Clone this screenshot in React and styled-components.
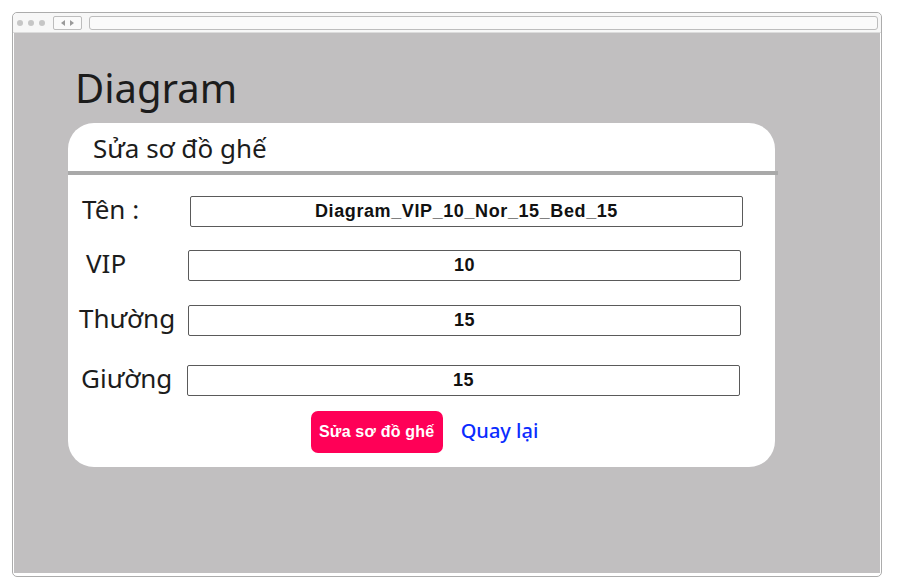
import React from 'react';
import styled, { createGlobalStyle } from 'styled-components';

const Global = createGlobalStyle`
  html, body { margin: 0; padding: 0; background: #fff; }
  body { font-family: "Noto Sans", "Liberation Sans", sans-serif; }
`;

const Frame = styled.div`
  margin: 12px 0 0 12px;
  width: 868px;
  height: 563px;
  border: 1px solid #acacac;
  border-radius: 5px;
  display: flex;
  flex-direction: column;
  background: #fff;
`;

const Toolbar = styled.div`
  height: 20px;
  border-bottom: 1px solid #dcdcdc;
  background: #f7f7f7;
  border-radius: 5px 5px 0 0;
  display: flex;
  align-items: center;
  padding: 0 3px 0 4px;
  box-sizing: border-box;
`;

const Dot = styled.span`
  width: 6px;
  height: 6px;
  border-radius: 50%;
  background: #c6c6c6;
  margin-right: 5px;
`;

const NavBox = styled.div`
  margin-left: 3px;
  width: 27px;
  height: 12px;
  border: 1px solid #bdbdbd;
  border-radius: 2px;
  background: #fafafa;
  display: flex;
  align-items: center;
  justify-content: center;
  gap: 5px;
`;

const Address = styled.div`
  margin-left: 7px;
  flex: 1;
  height: 12px;
  border: 1px solid #bdbdbd;
  border-radius: 3px;
  background: #fafafa;
`;

const Content = styled.div`
  margin: 0 1px;
  height: 540px;
  background: #c1bfc0;
  padding-left: 54px;
  box-sizing: border-box;
`;

const Title = styled.h1`
  margin: 31px 0 11px 7px;
  height: 48px;
  line-height: 48px;
  font-size: 40px;
  font-weight: 400;
  color: #1c1c1c;
`;

const Card = styled.div`
  width: 707px;
  height: 344px;
  background: #fff;
  border-radius: 26px;
  box-sizing: border-box;
`;

const CardHeader = styled.div`
  height: 48px;
  padding: 2px 0 0 25px;
  box-sizing: border-box;
  display: flex;
  align-items: center;
  font-size: 26px;
  color: #1c1c1c;
`;

const Divider = styled.div`
  height: 4px;
  margin-right: -3px;
  background: #a9a9a9;
`;

const Row = styled.div`
  display: grid;
  grid-template-columns: ${p => p.$inputX}px 553px;
  align-items: center;
  margin-top: ${p => p.$top}px;
  height: 31px;
`;

const Label = styled.label`
  padding-left: ${p => p.$x}px;
  margin-top: ${p => p.$dy}px;
  font-size: 26px;
  color: #1c1c1c;
  white-space: nowrap;
`;

const Field = styled.div`
  height: 31px;
  box-sizing: border-box;
  border: 1px solid #5a5a5a;
  border-radius: 2px;
  display: flex;
  align-items: center;
  justify-content: center;
  font-family: "Liberation Sans", Arial, sans-serif;
  font-weight: 700;
  font-size: 18px;
  letter-spacing: 0.6px;
  color: #111;
`;

const Actions = styled.div`
  margin-top: 15px;
  display: flex;
  align-items: center;
  justify-content: center;
  gap: 18px;
  padding-left: 6px;
`;

const Button = styled.button`
  width: 132px;
  height: 42px;
  border: none;
  border-radius: 7px;
  background: #ff0057;
  color: #fff;
  font-family: "Liberation Sans", Arial, sans-serif;
  font-weight: 700;
  font-size: 16px;
  letter-spacing: 0.2px;
  padding: 0;
  white-space: nowrap;
`;

const Back = styled.a`
  color: #0a2cff;
  font-size: 20px;
  font-weight: 500;
  text-decoration: none;
  margin-top: -4px;
`;

const rows = [
  { label: 'Tên :', value: 'Diagram_VIP_10_Nor_15_Bed_15', x: 14, inputX: 122, top: 20, dy: -4 },
  { label: 'VIP', value: '10', x: 18, inputX: 120, top: 24, dy: -5 },
  { label: 'Thường', value: '15', x: 11, inputX: 120, top: 23, dy: -4 },
  { label: 'Giường', value: '15', x: 13, inputX: 119, top: 30, dy: -5 },
];

export default function App() {
  return (
    <>
      <Global />
      <Frame>
        <Toolbar>
          <Dot /><Dot /><Dot />
          <NavBox>
            <svg width="4" height="6" viewBox="0 0 4 6"><path d="M4 0 L0 3 L4 6 Z" fill="#9a9a9a" /></svg>
            <svg width="4" height="6" viewBox="0 0 4 6"><path d="M0 0 L4 3 L0 6 Z" fill="#9a9a9a" /></svg>
          </NavBox>
          <Address />
        </Toolbar>
        <Content>
          <Title>Diagram</Title>
          <Card>
            <CardHeader>Sửa sơ đồ ghế</CardHeader>
            <Divider />
            {rows.map(r => (
              <Row key={r.label} $inputX={r.inputX} $top={r.top}>
                <Label $x={r.x} $dy={r.dy}>{r.label}</Label>
                <Field>{r.value}</Field>
              </Row>
            ))}
            <Actions>
              <Button>Sửa sơ đồ ghế</Button>
              <Back href="#">Quay lại</Back>
            </Actions>
          </Card>
        </Content>
      </Frame>
    </>
  );
}
